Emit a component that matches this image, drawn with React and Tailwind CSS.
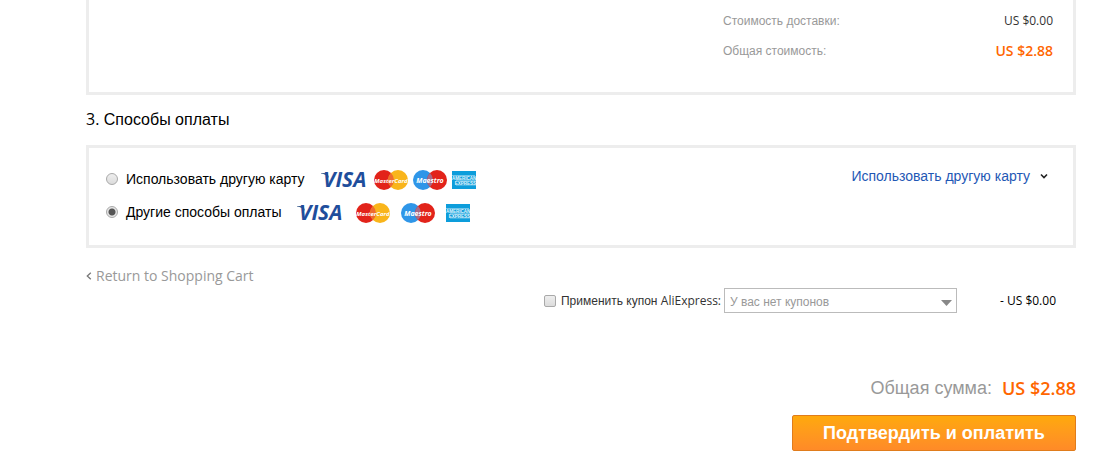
import React, { useState } from "react";

const shippingCost = "US $0.00";
const orderTotal = "US $2.88";

const arial = "font-['Liberation_Sans',Arial,sans-serif]";
const openSans = "font-['Open_Sans','Liberation_Sans',sans-serif]";

// Payment system logos
function Visa() {
  return (
    <svg className="overflow-visible" width="48" height="16" viewBox="0 0 48 16" role="img" aria-label="VISA">
      <path d="M0 1h6.500l1.500 5C6 3.400 3.500 2.200 0 1.600z" fill="#3d5f8f" />
      <text x="2" y="15" fill="#1f4e9c" fontFamily="Open Sans, sans-serif" fontSize="21" fontWeight="700" fontStyle="italic">
        VISA
      </text>
    </svg>
  );
}

function Circles({ name, left, right, middle, size }) {
  return (
    <svg width="34" height="20" viewBox="0 0 34 20" role="img" aria-label={name}>
      <circle cx="10" cy="10" r="10" fill={left} />
      <circle cx="24" cy="10" r="10" fill={right} />
      <path d="M17 2.900a10 10 0 0 1 0 14.200a10 10 0 0 1 0-14.200z" fill={middle} />
      <text x="17" y="12.500" textAnchor="middle" fill="#fff" fontFamily="Open Sans, sans-serif" fontSize={size} fontWeight="bold" fontStyle="italic">
        {name}
      </text>
    </svg>
  );
}

function Amex() {
  return (
    <svg width="24" height="18" viewBox="0 0 24 18" role="img" aria-label="American Express">
      <rect width="24" height="18" fill="#0d9ddb" />
      <g fill="#e6f6fd" fontFamily="Liberation Sans, Arial, sans-serif" fontWeight="bold">
        <text x="0" y="8.500" fontSize="4.500">AMERICAN</text>
        <text x="24" y="13.500" fontSize="4.500" textAnchor="end">EXPRESS</text>
      </g>
      <path d="M0 4.500h23M4 9.300h20M4 14h20" fill="none" stroke="#b5e2f6" strokeWidth="0.6" />
    </svg>
  );
}

function CardLogos() {
  return (
    <>
      <Visa />
      <Circles name="MasterCard" size={6} left="#e2231a" right="#f9b51b" middle="#ee6b2f" />
      <Circles name="Maestro" size={7} left="#2f96e8" right="#e2231a" middle="#a96a86" />
      <Amex />
    </>
  );
}

const radioClass =
  "size-3 shrink-0 appearance-none rounded-full border border-[#a9a9a9] bg-linear-to-b from-[#eeeeee] to-[#dcdcdc] checked:bg-[radial-gradient(circle,#555_0_3px,#e6e6e6_4px)]";

export default function App() {
  const [method, setMethod] = useState("other");
  const [useCoupon, setUseCoupon] = useState(false);

  return (
    <main className={`bg-white pr-[25px] pb-3 pl-[86px] text-black ${arial}`}>
      {/* Order costs */}
      <section className="flex justify-end border-3 border-t-0 border-[#ededed] pt-1.5 pr-5 pb-[26px]">
        <dl className="w-[330px] text-xs text-[#999]">
          <div className="flex h-[30px] items-center justify-between">
            <dt>Стоимость доставки:</dt>
            <dd className={`text-[#333] ${openSans}`}>{shippingCost}</dd>
          </div>
          <div className="flex h-[30px] items-center justify-between">
            <dt>Общая стоимость:</dt>
            <dd className={`text-sm font-semibold text-[#f60] ${openSans}`}>{orderTotal}</dd>
          </div>
        </dl>
      </section>

      {/* Payment methods */}
      <h2 className={`pt-3 pb-[13px] text-base ${arial}`}>
        <span className={openSans}>3.</span> Способы оплаты
      </h2>
      <section className="flex items-start justify-between border-3 border-[#ededed] pt-3.5 pr-[25px] pb-[17px] pl-[17px] text-sm">
        <div>
          <div className="flex h-[33px] items-center">
            <input id="card" type="radio" name="method" className={radioClass} checked={method === "card"} onChange={() => setMethod("card")} />
            <label htmlFor="card" className="flex items-center pl-2">
              Использовать другую карту
              <span className="flex items-center gap-[5px] pt-0.5 pl-4">
                <CardLogos />
              </span>
            </label>
          </div>
          <div className="flex h-[33px] items-center">
            <input id="other" type="radio" name="method" className={radioClass} checked={method === "other"} onChange={() => setMethod("other")} />
            <label htmlFor="other" className="flex items-center pl-2">
              Другие способы оплаты
              <span className="flex items-center gap-[11px] pt-0.5 pl-4">
                <CardLogos />
              </span>
            </label>
          </div>
        </div>
        <a href="#card" className="flex h-7 items-center gap-2.5 text-[#1f58b5]">
          Использовать другую карту
          <svg width="8" height="6" viewBox="0 0 8 6" fill="none" stroke="#222" strokeWidth="1.6">
            <path d="M1 1.500L4 4.500L7 1.500" />
          </svg>
        </a>
      </section>

      <div className="flex pt-4">
        <a href="#cart" className={`flex h-6 items-center gap-1 text-sm text-[#999] ${openSans}`}>
          <svg width="6" height="8" viewBox="0 0 6 8" fill="none" stroke="#777" strokeWidth="1.300">
            <path d="M4.800 0.800L1.300 4L4.800 7.200" />
          </svg>
          Return to Shopping Cart
        </a>
      </div>

      {/* Coupon */}
      <div className="flex items-center justify-end pr-5 text-xs text-[#333]">
        <input
          id="coupon"
          type="checkbox"
          className="size-3 appearance-none rounded-xs border border-[#a9a9a9] bg-linear-to-b from-[#eeeeee] to-[#dcdcdc] checked:bg-[#777]"
          checked={useCoupon}
          onChange={(e) => setUseCoupon(e.target.checked)}
        />
        <label htmlFor="coupon" className="pr-[3px] pl-[5px]">
          Применить купон <span className={openSans}>AliExpress:</span>
        </label>
        <div className="relative">
          <select aria-label="Купон" className="h-[25px] w-[233px] appearance-none border border-[#bbb] bg-white pt-0.5 pl-[5px] text-xs text-[#999]">
            <option>У вас нет купонов</option>
          </select>
          <svg className="pointer-events-none absolute top-3 right-[5px]" width="11" height="6" viewBox="0 0 11 6">
            <path d="M0 0h11L5.500 6z" fill="#888" />
          </svg>
        </div>
        <span className={`w-[99px] text-right text-black ${openSans}`}>- US $0.00</span>
      </div>

      {/* Total and confirmation */}
      <div className="flex items-center justify-end gap-2.5 pt-[61px] text-lg">
        <span className="text-[#999]">Общая сумма:</span>
        <span className={`font-semibold text-[#f60] ${openSans}`}>{orderTotal}</span>
      </div>
      <div className="flex justify-end pt-[13px]">
        <button type="button" className="h-9 w-[284px] rounded-xs border border-[#e07c1c] bg-linear-to-b from-[#ffa90a] to-[#ff8a27] text-lg font-bold text-white">
          Подтвердить и оплатить
        </button>
      </div>
    </main>
  );
}
